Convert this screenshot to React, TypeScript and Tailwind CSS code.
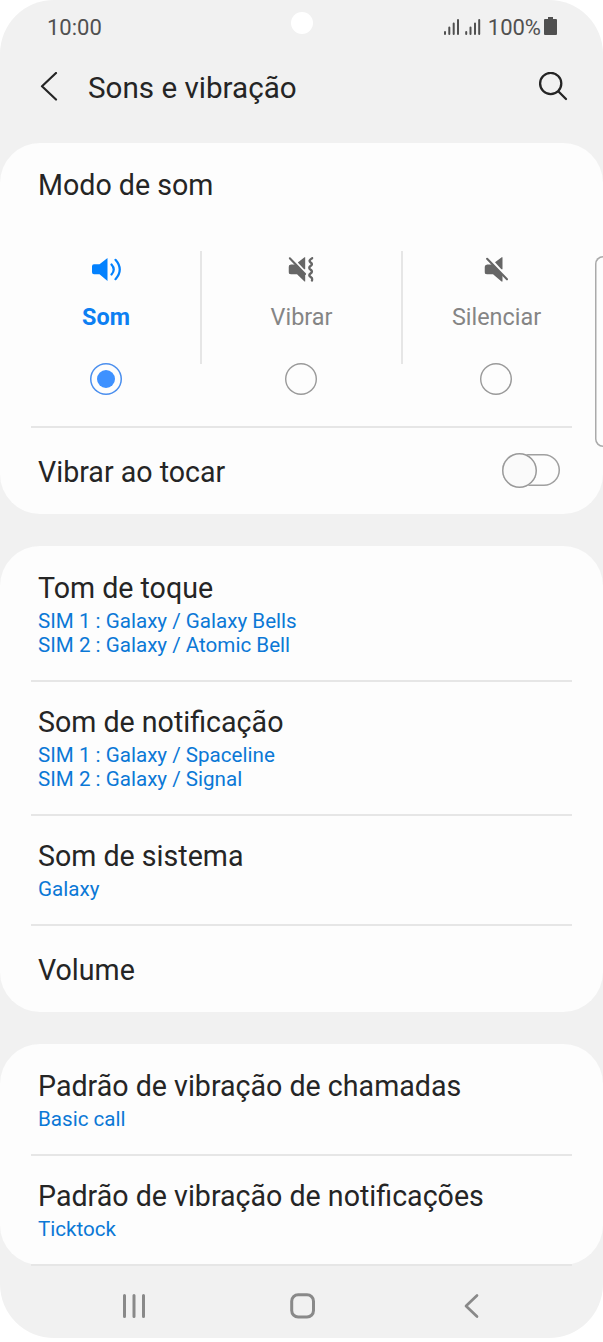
import type { ReactNode } from "react";

type Kind = "som" | "vibrar" | "silenciar";

function Speaker({ kind }: { kind: Kind }) {
  if (kind === "som") {
    return (
      <svg className="translate-x-[0.5px]" width="30" height="24" viewBox="0 0 30 24" fill="none">
        <path d="M2.500 6.300H8L16 0v23L8 16.300H2.500Q.5 16.300.5 14.300V8.300Q.5 6.300 2.500 6.300Z" fill="#0381fe" />
        <path d="M20 6.500Q24.500 11.500 20 16.500M24 1.800Q32.500 11.500 24 21.200" stroke="#0381fe" strokeWidth="2.200" strokeLinecap="round" />
      </svg>
    );
  }
  if (kind === "vibrar") {
    return (
      <svg className="-translate-x-[0.5px]" width="25" height="25" viewBox="0 0 25 25" fill="none">
        <path d="M2.500 7.500H7.500L16.700 17V24.500H16L8.500 17.200H2.500Q0 17.200 0 14.700V10Q0 7.800 2.500 7.500ZM9.300 5.600L16 .3H16.700V12.200H15.600Z" fill="#666" />
        <path d="M1.300 1.300L16.500 17" stroke="#666" strokeWidth="2.100" strokeLinecap="round" />
        <path d="M23.700 1.200Q19.500 3.500 22.200 5.500Q24.700 7.200 22 9Q19.500 11 22.200 12.800Q24.700 14.700 22 16.500Q19.500 18.300 22.200 20Q24.500 21.500 23.500 23.500" stroke="#666" strokeWidth="2.400" strokeLinecap="round" />
      </svg>
    );
  }
  return (
    <svg className="translate-x-[0.5px]" width="24" height="25" viewBox="0 0 24 25" fill="none">
      <path d="M2.600 7.500H8L18 18V24.500H17L8.500 17.200H2.500Q0 17.200 0 14.700V10Q0 8 2.600 7.500ZM10.500 5.200L17.200.3H18V12.200H16.800Z" fill="#666" />
      <path d="M2.600 1.800L22.500 22.300" stroke="#666" strokeWidth="2.100" strokeLinecap="round" />
    </svg>
  );
}

function Mode({ kind, label, checked = false }: { kind: Kind; label: string; checked?: boolean }) {
  return (
    <div className="flex w-[195px] flex-col items-center">
      <div className="flex h-[37px] items-center justify-center"><Speaker kind={kind} /></div>
      <div className={checked ? "mt-[15px] h-[29px] text-[23.4px] leading-[29px] font-bold text-[#0d7ff2]" : "mt-[15px] h-[29px] translate-x-[0.5px] text-[23.4px] leading-[29px] text-[#858585]"}>{label}</div>
      <div className={checked ? "mt-[31px] flex size-[32px] items-center justify-center rounded-full shadow-[inset_0_0_0_1.5px_#4b8fee]" : "mt-[31px] size-[32px] rounded-full shadow-[inset_0_0_0_1.4px_#9a9a9a]"}>
        {checked && <div className="size-[18px] rounded-full bg-[#3e91ff]" />}
      </div>
    </div>
  );
}

function Row({ title, lines, className }: { title: string; lines: string[]; className: string }) {
  return (
    <div className={className}>
      <div className="mb-[4px] text-[28.600px] leading-[34px]">{title}</div>
      {lines.map((line) => (
        <div key={line} className="text-[20.600px] leading-[24px] text-[#0b78d6]">{line}</div>
      ))}
    </div>
  );
}

function Card({ children, className }: { children: ReactNode; className: string }) {
  return <section className={className}>{children}</section>;
}

const divider = "mr-[31px] ml-[31px] h-[2px] shrink-0 bg-[#e6e6e6]";

export default function App() {
  return (
    <div className="h-[1342px] w-[603px] bg-white font-['Roboto',sans-serif] text-[#252525]">
      <main className="relative flex h-[1338px] w-[603px] flex-col overflow-hidden rounded-[54px] bg-[#f1f1f1]">
        <header className="h-[143px] shrink-0">
          <div className="flex h-[53px] items-center pr-[46px] pl-[47px] text-[22px] text-[#505050]">
            <span className="w-[243.5px] pt-[2px]">10:00</span>
            <span className="mb-[7px] size-[22px] rounded-full bg-white" />
            <svg className="ml-auto" width="38" height="18" viewBox="0 0 38 18" fill="none" stroke="#505050" strokeWidth="2" strokeLinecap="round">
              <path d="M1 14v2M5.300 9.500V16M9.700 5.500V16M14 2V16M22.200 14v2M26.500 9.500V16M31 5.500V16M35.200 2V16" />
            </svg>
            <span className="ml-[6px] pt-[2px]">100%</span>
            <svg className="mb-[2px] ml-[3px]" width="13" height="18" viewBox="0 0 13 18" fill="#505050"><path d="M4 0h5v2h3q1 0 1 1v14q0 1-1 1H1q-1 0-1-1V3q0-1 1-1h3Z" /></svg>
          </div>
          <div className="flex h-[68px] items-center pr-[34px] pl-[40px]">
            <svg width="18" height="30" viewBox="0 0 18 30" fill="none" stroke="#252525" strokeWidth="2.200" strokeLinecap="round" strokeLinejoin="round"><path d="M16 1L2 14.200L16 27.500" /></svg>
            <h1 className="ml-[30px] pt-[2px] text-[29.600px] leading-[40px]">Sons e vibração</h1>
            <svg className="ml-auto" width="31" height="30" viewBox="0 0 31 30" fill="none" stroke="#252525" strokeWidth="2.300" strokeLinecap="round"><circle cx="12.700" cy="11.500" r="10.600" /><path d="M20.500 19.500L28 27" /></svg>
          </div>
        </header>

        <Card className="h-[371px] shrink-0 rounded-[40px] bg-[#fdfdfd]">
          <h2 className="h-[108px] pt-[25px] pl-[38px] text-[28.600px] leading-[34px]">Modo de som</h2>
          <div className="flex h-[175px] pl-[8.5px]">
            <Mode kind="som" label="Som" checked />
            <div className="-mx-px h-[113px] w-[2px] shrink-0 -translate-x-[3px] bg-[#e6e6e6]" />
            <Mode kind="vibrar" label="Vibrar" />
            <div className="-mx-px h-[113px] w-[2px] shrink-0 translate-x-[3px] bg-[#e6e6e6]" />
            <Mode kind="silenciar" label="Silenciar" />
          </div>
          <div className={divider} />
          <div className="flex h-[84px] items-center justify-between pr-[43px] pl-[38px]">
            <span className="pt-[4px] text-[28.600px]">Vibrar ao tocar</span>
            <div className="flex h-[32px] w-[58px] items-center rounded-full shadow-[inset_0_0_0_1.5px_#a0a0a0]">
              <div className="size-[35px] shrink-0 rounded-full bg-[#fafafa] shadow-[inset_0_0_0_1.5px_#999]" />
            </div>
          </div>
        </Card>

        <Card className="mt-[32px] h-[466px] shrink-0 rounded-[40px] bg-[#fdfdfd]">
          <Row className="h-[134px] pt-[25px] pl-[38px]" title="Tom de toque" lines={["SIM 1 : Galaxy / Galaxy Bells", "SIM 2 : Galaxy / Atomic Bell"]} />
          <div className={divider} />
          <Row className="h-[132px] pt-[23px] pl-[38px]" title="Som de notificação" lines={["SIM 1 : Galaxy / Spaceline", "SIM 2 : Galaxy / Signal"]} />
          <div className={divider} />
          <Row className="h-[108px] pt-[23px] pl-[38px]" title="Som de sistema" lines={["Galaxy"]} />
          <div className={divider} />
          <Row className="h-[86px] pt-[27px] pl-[38px]" title="Volume" lines={[]} />
        </Card>

        <Card className="mt-[32px] h-[221px] shrink-0 rounded-[40px] bg-[#fdfdfd]">
          <Row className="h-[110px] pt-[25px] pl-[38px]" title="Padrão de vibração de chamadas" lines={["Basic call"]} />
          <div className={divider} />
          <Row className="h-[108px] pt-[23px] pl-[38px]" title="Padrão de vibração de notificações" lines={["Ticktock"]} />
          <div className={divider} />
        </Card>

        <nav className="flex h-[73px] items-center pt-[8px] pl-[122px]">
          <svg width="24" height="26" viewBox="0 0 24 26" stroke="#898989" strokeWidth="3" strokeLinecap="round"><path d="M2.500 2.500v21M12 2.500v21M21.500 2.500v21" /></svg>
          <svg className="ml-[144px]" width="26" height="26" viewBox="0 0 26 26" fill="none" stroke="#898989" strokeWidth="3"><rect x="1.700" y="1.700" width="21.800" height="22.300" rx="6.500" /></svg>
          <svg className="ml-[147px]" width="17" height="26" viewBox="0 0 17 26" fill="none" stroke="#898989" strokeWidth="2.700" strokeLinecap="round" strokeLinejoin="round"><path d="M14 2.500L3 13L14 23.500" /></svg>
        </nav>

        <div className="absolute top-[256px] -right-[8px] h-[191px] w-[16px] rounded-[8px] bg-[#fdfdfd] shadow-[inset_0_0_0_1.5px_#aaa]" />
      </main>
    </div>
  );
}
